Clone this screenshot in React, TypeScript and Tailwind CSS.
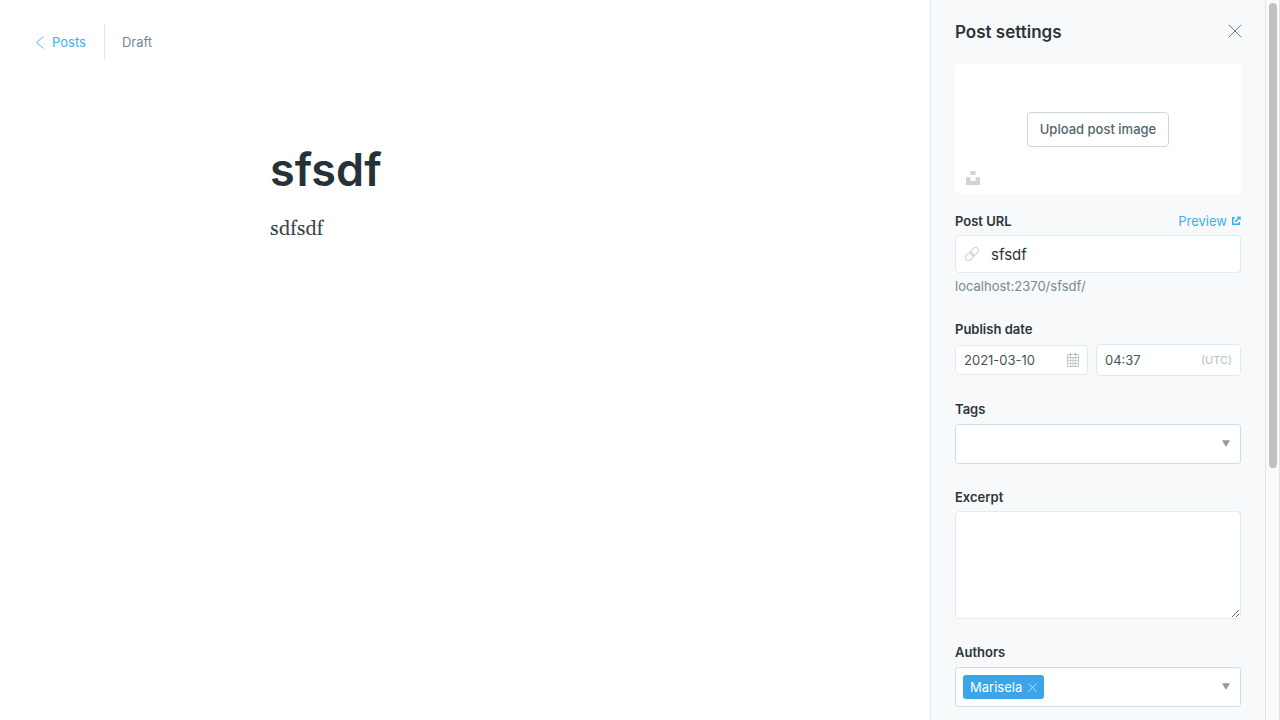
import type { ReactNode } from "react";

const fieldBorder = "rounded-[4px] border border-[#dfebf2] bg-white";

function Label({ htmlFor, children }: { htmlFor: string; children: ReactNode }) {
  return (
    <label htmlFor={htmlFor} className="block text-[13px] leading-5 font-semibold text-[#2b353a]">
      {children}
    </label>
  );
}

function Caret() {
  return (
    <svg aria-hidden="true" width="8" height="8" viewBox="0 0 8 8" className="shrink-0">
      <path d="M0 0.3h8L4 7z" fill="#999999" />
    </svg>
  );
}

function Scrollbar() {
  return (
    <div aria-hidden="true" className="flex w-[15px] shrink-0 justify-center border-x border-[#e3e3e3] bg-[#fafafa] pt-[3px]">
      <div className="h-[64.6vh] w-2 rounded-full bg-[#c0c0c0]" />
    </div>
  );
}

function PostSettings() {
  return (
    <aside className="flex w-[335px] shrink-0 flex-col overflow-hidden border-l border-[#dfebf2] bg-[#f8f9fb] px-6">
      <header className="flex h-16 shrink-0 items-center justify-between">
        <h2 className="text-[17px] leading-6 font-semibold text-[#2b353a]">Post settings</h2>
        <button type="button" aria-label="Close" className="pb-[2px]">
          <svg width="14" height="14" viewBox="0 0 14 14" fill="none" stroke="#5d6a71" strokeWidth="0.9" strokeLinecap="round" overflow="visible">
            <path d="M2 1l12 12M14 1L2 13" />
          </svg>
        </button>
      </header>

      <section className="relative mb-4 flex h-[130px] shrink-0 items-center justify-center rounded-[4px] bg-white">
        <button
          type="button"
          className="h-[35px] rounded-[4px] border border-[#c8d7de] bg-white px-3 pt-[2px] text-[13px] font-medium text-[#54666d]"
        >
          Upload post image
        </button>
        <button type="button" aria-label="Search Unsplash" className="absolute bottom-[9px] left-[11px]">
          <svg width="14" height="14" viewBox="0 0 14 14" fill="#d3d3d3" className="block">
            <path d="M4.4 0h5.2v3.9H4.4zM0 6.2h4.4v3.9h5.2V6.2H14V14H0z" />
          </svg>
        </button>
      </section>

      <section className="mb-[23px]">
        <div className="flex items-center justify-between">
          <Label htmlFor="url">Post URL</Label>
          <a href="#preview" className="flex items-center gap-1 pt-px text-[13px] leading-5 text-[#3eb0ef]">
            Preview
            <svg width="10" height="10" viewBox="0 0 10 10" fill="none" stroke="currentColor" strokeWidth="1.6">
              <path d="M4 1.8H1.8v6.4h6.4V6M4.2 5.8L8.4 1.6" />
              <path d="M5.6.4h4v4z" fill="currentColor" stroke="none" />
            </svg>
          </a>
        </div>
        <div className={`${fieldBorder} mt-1 flex h-[38px] items-center gap-3 px-[9px]`}>
          <svg aria-hidden="true" width="14" height="14" viewBox="0 0 14 14" fill="none" stroke="#c3d3db" className="shrink-0">
            <g transform="rotate(-45 7 7)">
              <rect x="-1" y="4" width="9" height="6" rx="3" />
              <rect x="6" y="4" width="9" height="6" rx="3" />
            </g>
          </svg>
          <input id="url" defaultValue="sfsdf" className="min-w-0 flex-1 bg-transparent pt-[2px] text-[15px] text-[#2b353a] outline-none" />
        </div>
        <p className="mt-[3px] text-[13px] leading-5 text-[#738a94]">localhost:2370/sfsdf/</p>
      </section>

      <section className="mb-[23px]">
        <Label htmlFor="date">Publish date</Label>
        <div className="mt-[5px] flex items-center gap-2">
          <div className={`${fieldBorder} flex h-[30px] w-[133px] shrink-0 items-center px-2`}>
            <input id="date" defaultValue="2021-03-10" className="min-w-0 flex-1 bg-transparent pt-[2px] text-[13px] text-[#465359] outline-none" />
            <svg aria-hidden="true" width="12" height="14" viewBox="0 0 12 14" fill="none" stroke="#b3bec4" className="shrink-0">
              <path d="M.5 1.500h11v12H.5z" strokeWidth="0.8" />
              <path d="M0 4.500h12" />
              <path d="M3.500 0v3M8.500 0v3" strokeWidth="1.4" />
              <path d="M3.500 5v8M6 5v8M8.500 5v8M.5 7.500h11M.5 10.500h11" strokeWidth="0.7" />
            </svg>
          </div>
          <div className={`${fieldBorder} flex h-8 min-w-0 flex-1 items-center px-2`}>
            <input aria-label="Publish time" defaultValue="04:37" className="min-w-0 flex-1 bg-transparent pt-[2px] text-[13px] text-[#465359] outline-none" />
            <span className="text-[11px] text-[#b3c0c7]">(UTC)</span>
          </div>
        </div>
      </section>

      <section className="mb-[23px]">
        <Label htmlFor="tags">Tags</Label>
        <div className="mt-[5px] flex h-10 items-center rounded-[3px] border border-[#cfdfe7] bg-white px-[10px]">
          <input id="tags" role="combobox" aria-expanded="false" aria-controls="tags-list" className="min-w-0 flex-1 bg-transparent text-[13px] outline-none" />
          <Caret />
        </div>
      </section>

      <section className="mb-[23px]">
        <Label htmlFor="excerpt">Excerpt</Label>
        <textarea id="excerpt" className={`${fieldBorder} mt-1 block h-[108px] w-full resize-y p-2 text-[15px] text-[#2b353a] outline-none`} />
      </section>

      <section className="mb-[23px]">
        <Label htmlFor="authors">Authors</Label>
        <div className="mt-[5px] flex h-10 items-center rounded-[3px] border border-[#cfdfe7] bg-white pr-[10px] pl-[7px]">
          <span className="flex h-6 items-center gap-[6px] rounded-[3px] bg-[#3aa5e9] px-[7px] pt-px text-[13px] text-white">
            Marisela
            <button type="button" aria-label="Remove Marisela">
              <svg width="9" height="9" viewBox="0 0 9 9" fill="none" stroke="#ffffff" strokeOpacity="0.75" strokeWidth="0.9" className="block">
                <path d="M.5.5l8 8M8.500 .5l-8 8" />
              </svg>
            </button>
          </span>
          <input id="authors" role="combobox" aria-expanded="false" aria-controls="authors-list" className="min-w-0 flex-1 bg-transparent text-[13px] outline-none" />
          <Caret />
        </div>
      </section>
    </aside>
  );
}

export default function App() {
  return (
    <div className="flex h-screen overflow-hidden bg-white font-['Inter',sans-serif]">
      <main className="min-w-0 flex-1">
        <header className="flex items-center px-9 pt-6 text-[13px] leading-5">
          <a href="#posts" className="flex h-9 items-center gap-2 border-r border-[#dae9f0] pr-[18px] text-[#3eb0ef]">
            <svg aria-hidden="true" width="8" height="13" viewBox="0 0 8 13" fill="none" stroke="currentColor" strokeWidth="0.9">
              <path d="M7.500 .5l-7 6 7 6" />
            </svg>
            Posts
          </a>
          <span className="pl-[17px] text-[#738a94]">Draft</span>
        </header>
        <article className="w-full px-8 pt-20 xl:px-[270px]">
          <h1 className="text-[45px] leading-[60px] font-semibold text-[#263238]">sfsdf</h1>
          <p className="mt-[13px] font-['Gelasio','Georgia','Liberation_Serif',serif] text-[20px] leading-8 text-[#3a464c]">sdfsdf</p>
        </article>
      </main>
      <PostSettings />
      <Scrollbar />
    </div>
  );
}
